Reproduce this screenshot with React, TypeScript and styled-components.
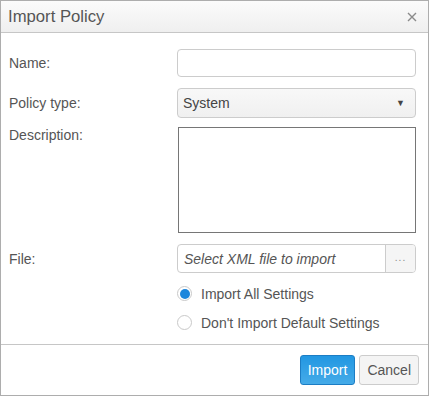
import React from "react";
import styled, { createGlobalStyle } from "styled-components";

const Global = createGlobalStyle`
  html, body { margin: 0; padding: 0; background: #fff; }
  body { font-family: "Liberation Sans", Arial, sans-serif; }
  * { box-sizing: border-box; }
`;

const Dialog = styled.div`
  width: 429px;
  height: 396px;
  border: 1px solid #adadad;
  display: flex;
  flex-direction: column;
  background: #fff;
  color: #555;
  font-size: 14px;
`;

const Header = styled.div`
  height: 32px;
  flex: none;
  display: flex;
  align-items: center;
  justify-content: space-between;
  padding: 0 10px 0 7px;
  background: linear-gradient(#fbfbfb, #efefef);
  border-bottom: 1px solid #c6c6c6;
`;

const Title = styled.div`
  font-size: 16.7px;
  color: #555;
  padding-top: 1px;
`;

const CloseButton = styled.button`
  border: 0;
  background: none;
  padding: 0;
  width: 12px;
  height: 12px;
  display: flex;
  align-items: center;
  justify-content: center;
  cursor: pointer;
`;

const Body = styled.div`
  flex: 1;
  padding: 16px 11px 0 8px;
  display: flex;
  flex-direction: column;
`;

const Row = styled.div<{ $gap: number; $top?: boolean }>`
  display: flex;
  align-items: ${(p) => (p.$top ? "flex-start" : "center")};
  margin-bottom: ${(p) => p.$gap}px;
`;

const Label = styled.label<{ $pt?: number }>`
  width: 168px;
  flex: none;
  padding-top: ${(p) => p.$pt ?? 0}px;
  color: #555;
`;

const TextInput = styled.input`
  width: 239px;
  height: 28px;
  border: 1px solid #ccc;
  border-radius: 4px;
  padding: 0 6px;
  font: inherit;
  outline: none;
`;

const Select = styled.div`
  width: 239px;
  height: 30px;
  border: 1px solid #ccc;
  border-radius: 4px;
  background: linear-gradient(#f8f8f8, #f0f0f0);
  display: flex;
  align-items: center;
  justify-content: space-between;
  padding: 0 10px 0 5px;
  color: #444;
`;

const Caret = styled.span`
  font-size: 9px;
  color: #444;
`;

const TextArea = styled.textarea`
  width: 238px;
  height: 106px;
  margin-left: 1px;
  border: 1px solid #767676;
  resize: none;
  font: inherit;
  outline: none;
`;

const FileBox = styled.div`
  width: 239px;
  height: 29px;
  border: 1px solid #ccc;
  border-radius: 4px;
  display: flex;
  overflow: hidden;
`;

const FilePlaceholder = styled.div`
  flex: 1;
  display: flex;
  align-items: center;
  padding-left: 6px;
  font-style: italic;
  color: #555;
`;

const BrowseButton = styled.div`
  width: 30px;
  border-left: 1px solid #ccc;
  background: #f5f5f5;
  display: flex;
  align-items: center;
  justify-content: center;
  color: #888;
  font-size: 10px;
  letter-spacing: 1px;
  padding-bottom: 2px;
`;

const RadioRow = styled.div`
  display: flex;
  align-items: center;
  height: 29px;
  margin-left: 168px;
`;

const RadioCircle = styled.span<{ $checked?: boolean }>`
  width: 15px;
  height: 15px;
  border-radius: 50%;
  border: 1px solid #c9c9c9;
  background: #fff;
  display: flex;
  align-items: center;
  justify-content: center;
  margin-right: 9px;
  margin-left: 0;
  &::after {
    content: "";
    width: 10px;
    height: 10px;
    border-radius: 50%;
    background: ${(p) => (p.$checked ? "#1c86dc" : "transparent")};
  }
`;

const RadioLabel = styled.span`
  color: #555;
`;

const Footer = styled.div`
  flex: none;
  height: 51px;
  border-top: 1px solid #c6c6c6;
  display: flex;
  justify-content: flex-end;
  align-items: flex-start;
  gap: 4px;
  padding: 10px 9px 0 0;
`;

const Button = styled.button<{ $primary?: boolean }>`
  height: 30px;
  padding: 0 ${(p) => (p.$primary ? 7 : 7)}px;
  border-radius: 3px;
  font: inherit;
  font-size: 14px;
  cursor: pointer;
  border: 1px solid ${(p) => (p.$primary ? "#1c7dc4" : "#ccc")};
  color: ${(p) => (p.$primary ? "#fff" : "#555")};
  background: ${(p) =>
    p.$primary ? "linear-gradient(#2297e2, #45abe8)" : "#f4f4f4"};
`;

export default function App() {
  return (
    <>
      <Global />
      <Dialog>
        <Header>
          <Title>Import Policy</Title>
          <CloseButton aria-label="Close">
            <svg width="10" height="10" viewBox="0 0 10 10">
              <path d="M1 1 L9 9 M9 1 L1 9" stroke="#8a8a8a" strokeWidth="1.4" />
            </svg>
          </CloseButton>
        </Header>
        <Body>
          <Row $gap={11}>
            <Label>Name:</Label>
            <TextInput />
          </Row>
          <Row $gap={9}>
            <Label>Policy type:</Label>
            <Select>
              <span>System</span>
              <Caret>▼</Caret>
            </Select>
          </Row>
          <Row $gap={11} $top>
            <Label $pt={0}>Description:</Label>
            <TextArea />
          </Row>
          <Row $gap={6}>
            <Label>File:</Label>
            <FileBox>
              <FilePlaceholder>Select XML file to import</FilePlaceholder>
              <BrowseButton>...</BrowseButton>
            </FileBox>
          </Row>
          <RadioRow>
            <RadioCircle $checked />
            <RadioLabel>Import All Settings</RadioLabel>
          </RadioRow>
          <RadioRow>
            <RadioCircle />
            <RadioLabel>Don't Import Default Settings</RadioLabel>
          </RadioRow>
        </Body>
        <Footer>
          <Button $primary>Import</Button>
          <Button>Cancel</Button>
        </Footer>
      </Dialog>
    </>
  );
}
